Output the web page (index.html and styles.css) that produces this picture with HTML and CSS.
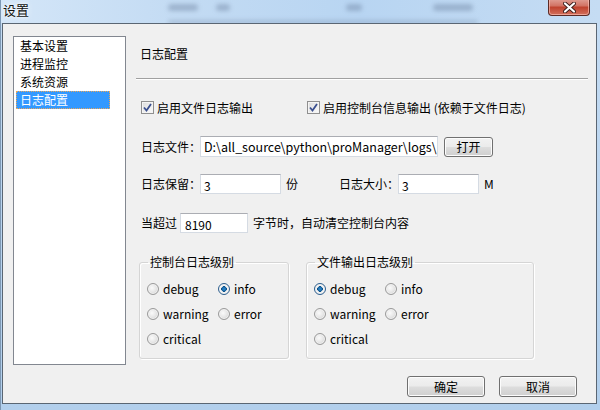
FILE: index.html
```html
<!DOCTYPE html>
<html lang="zh">
<head>
<meta charset="utf-8">
<title>设置</title>
<link rel="stylesheet" href="styles.css">
</head>
<body>
<div class="window">
  <div class="titlebar">
    <span class="title">设置</span>
    <div class="blur b1"></div><div class="blur b2"></div><div class="blur b3"></div><div class="blur b4"></div><div class="blur b5"></div>
    <div class="close"><svg width="13" height="11" viewBox="0 0 13 11"><path d="M2 1.5 L11 9.5 M11 1.5 L2 9.5" stroke="#3b1d1a" stroke-width="4" stroke-linecap="round"/><path d="M2 1.5 L11 9.5 M11 1.5 L2 9.5" stroke="#fff" stroke-width="2.2" stroke-linecap="round"/></svg></div>
  </div>
  <div class="client">
    <div class="main">
      <ul class="nav">
        <li>基本设置</li>
        <li>进程监控</li>
        <li>系统资源</li>
        <li class="sel">日志配置</li>
      </ul>
      <div class="panel">
        <div class="heading">日志配置</div>
        <div class="sep"></div>
        <div class="row checks">
          <label class="check c1"><span class="box"><svg width="9" height="9" viewBox="0 0 9 9"><path d="M1 4.5 L3.5 7.5 L8 1" fill="none" stroke="#3a4f8f" stroke-width="1.8"/></svg></span>启用文件日志输出</label>
          <label class="check"><span class="box"><svg width="9" height="9" viewBox="0 0 9 9"><path d="M1 4.5 L3.5 7.5 L8 1" fill="none" stroke="#3a4f8f" stroke-width="1.8"/></svg></span>启用控制台信息输出 (依赖于文件日志)</label>
        </div>
        <div class="row file">
          <span class="lbl">日志文件：</span>
          <div class="input path">D:\all_source\python\proManager\logs\</div>
          <div class="btn open">打开</div>
        </div>
        <div class="row keep">
          <span class="lbl">日志保留：</span>
          <div class="input small">3</div>
          <span class="unit u1">份</span>
          <span class="lbl">日志大小：</span>
          <div class="input small">3</div>
          <span class="unit">M</span>
        </div>
        <div class="row over">
          <span class="lbl">当超过</span>
          <div class="input bytes">8190</div>
          <span class="unit">字节时，自动清空控制台内容</span>
        </div>
        <div class="groups">
          <fieldset class="grp g1">
            <legend>控制台日志级别</legend>
            <div class="radios">
              <span class="radio"><i class="dot"></i>debug</span>
              <span class="radio"><i class="dot on"></i>info</span>
              <span class="radio"><i class="dot"></i>warning</span>
              <span class="radio"><i class="dot"></i>error</span>
              <span class="radio"><i class="dot"></i>critical</span>
            </div>
          </fieldset>
          <fieldset class="grp g2">
            <legend>文件输出日志级别</legend>
            <div class="radios">
              <span class="radio"><i class="dot on"></i>debug</span>
              <span class="radio"><i class="dot"></i>info</span>
              <span class="radio"><i class="dot"></i>warning</span>
              <span class="radio"><i class="dot"></i>error</span>
              <span class="radio"><i class="dot"></i>critical</span>
            </div>
          </fieldset>
        </div>
      </div>
    </div>
    <div class="footer">
      <div class="btn dlg">确定</div>
      <div class="btn dlg">取消</div>
    </div>
  </div>
</div>
</body>
</html>
```
FILE: styles.css
```css
* { box-sizing: border-box; }
html, body { margin: 0; padding: 0; }
body {
  width: 600px; height: 410px; overflow: hidden;
  font-family: "Noto Sans CJK SC", "Microsoft YaHei", sans-serif;
  font-size: 12px; color: #000;
}
.window {
  width: 600px; height: 410px;
  display: flex; flex-direction: column;
  background: linear-gradient(180deg, #c6ddf4 0%, #bcd6f0 40%, #b2cfec 100%);
  border-left: 1px solid #7d98b4;
}
.titlebar {
  flex: none;
  height: 23px; position: relative; overflow: hidden;
  background: linear-gradient(90deg, #d4e6f8 0%, #c3dbf3 30%, #b8d5f2 60%, #c5dcf3 100%);
}
.title {
  position: absolute; left: 2px; top: 1px;
  font-size: 13px; line-height: 18px; color: #111;
  text-shadow: 0 0 6px #fff, 0 0 3px #fff;
  z-index: 2;
}
.blur { position: absolute; height: 7px; border-radius: 4px; background: rgba(90,110,140,0.35); filter: blur(2px); }
.b1 { left: 167px; top: 4px; width: 30px; }
.b2 { left: 215px; top: 4px; width: 14px; }
.b3 { left: 345px; top: 4px; width: 16px; }
.b4 { left: 432px; top: 4px; width: 40px; }
.b5 { left: 167px; top: 20px; width: 310px; height: 4px; background: rgba(90,110,140,0.25); }
.close {
  position: absolute; left: 547px; top: -2px; width: 42px; height: 18px;
  border: 1px solid #5c2a25; border-top: none;
  border-radius: 0 0 4px 4px;
  background: linear-gradient(180deg, #e3a69c 0%, #d27465 45%, #c0432f 55%, #d2705c 100%);
  box-shadow: inset 0 0 0 1px rgba(255,200,190,0.6);
  display: flex; align-items: center; justify-content: center; padding-top: 2px;
}
.client {
  flex: none;
  height: 381px;
  margin: 0 3px 6px 1px;
  background: #f0f0f0;
  border: 1px solid #5a6673;
  display: flex; flex-direction: column;
  padding: 12px 0 0 10px;
}
.main { display: flex; flex: none; height: 329px; }
.nav {
  list-style: none; margin: 0; padding: 0 2px;
  width: 113px; height: 329px;
  background: #fff; border: 1px solid #828790;
}
.nav li { height: 18px; line-height: 18px; padding-left: 4px; }
.nav li.sel { background: #3399ff; color: #fff; outline: 1px dotted #e8a65a; outline-offset: -1px; width: 94px; }
.panel { margin-left: 10px; width: 452px; display: flex; flex-direction: column; }
.heading { margin-top: 10px; padding-left: 4px; line-height: 16px; height: 16px; }
.sep { margin-top: 16px; height: 1px; background: #a0a0a0; border-bottom: 1px solid #fff; box-sizing: content-box; }
.row { display: flex; align-items: center; padding-left: 5px; }
.checks { margin-top: 19px; height: 16px; }
.check { display: flex; align-items: center; gap: 3px; }
.check.c1 { width: 166px; }
.box {
  width: 13px; height: 13px; border: 1px solid #8f8f8f;
  background: linear-gradient(135deg, #dcdcdc, #fbfbfb);
  display: flex; align-items: center; justify-content: center;
  box-shadow: inset 0 0 0 1px #f4f4f4;
}
.file { margin-top: 21px; height: 21px; }
.lbl { line-height: 16px; }
.input {
  height: 21px; background: #fff;
  border: 1px solid #d5dbe3; border-top-color: #abadb3;
  padding: 0 3px; line-height: 19px; font-size: 12px;
  white-space: nowrap; overflow: hidden;
}
.input.path { width: 238px; margin-left: -1px; font-size: 12.5px; }
.btn {
  display: flex; align-items: center; justify-content: center;
  border: 1px solid #707070; border-radius: 3px;
  background: linear-gradient(180deg, #f2f2f2 0%, #ebebeb 48%, #dddddd 52%, #cfcfcf 100%);
  box-shadow: inset 0 0 0 1px #fcfcfc;
}
.btn.open { width: 49px; height: 20px; margin-left: 6px; }
.keep { margin-top: 17px; height: 20px; }
.input.small { width: 81px; height: 20px; line-height: 20px; padding-top: 1px; margin-left: -1px; }
.unit { margin-left: 5px; line-height: 16px; }
.unit.u1 { width: 53px; }
.over { margin-top: 19px; height: 20px; }
.input.bytes { width: 68px; height: 20px; margin-left: 3px; line-height: 20px; padding-top: 1px; padding-left: 4px; }
.groups { display: flex; margin-top: 22px; padding-left: 3px; gap: 17px; }
.grp {
  margin: 0; padding: 12px 0 0 7px;
  border: 1px solid #d5d5d5; border-radius: 3px;
  box-shadow: inset 1px 1px 0 #fff, 1px 1px 0 #fff;
  height: 104px;
}
.grp legend { padding: 0 2px; margin-left: 1px; line-height: 14px; }
.g1 { width: 150px; }
.g2 { width: 228px; }
.radios { display: grid; grid-template-columns: 71px auto; row-gap: 9px; }
.radio { display: flex; align-items: center; gap: 4px; height: 16px; line-height: 16px; }
.dot {
  width: 12px; height: 12px; border-radius: 50%;
  border: 1px solid #9a9a9a;
  background: radial-gradient(circle at 40% 40%, #fafafa 0%, #e8e8e8 45%, #c9c9c9 100%);
  box-shadow: inset 0 0 0 1px #f2f2f2;
  flex: none;
}
.dot.on {
  background: radial-gradient(circle at 50% 50%, #2a8ad4 0%, #1b6aa8 28%, #0f4d80 38%, #f6f6f6 42%, #dedede 100%);
  border-color: #2d5f8f;
}
.footer { display: flex; justify-content: flex-end; gap: 14px; padding: 11px 19px 0 0; height: 38px; flex: none; align-items: flex-start; }
.btn.dlg { width: 78px; height: 21px; }
```
